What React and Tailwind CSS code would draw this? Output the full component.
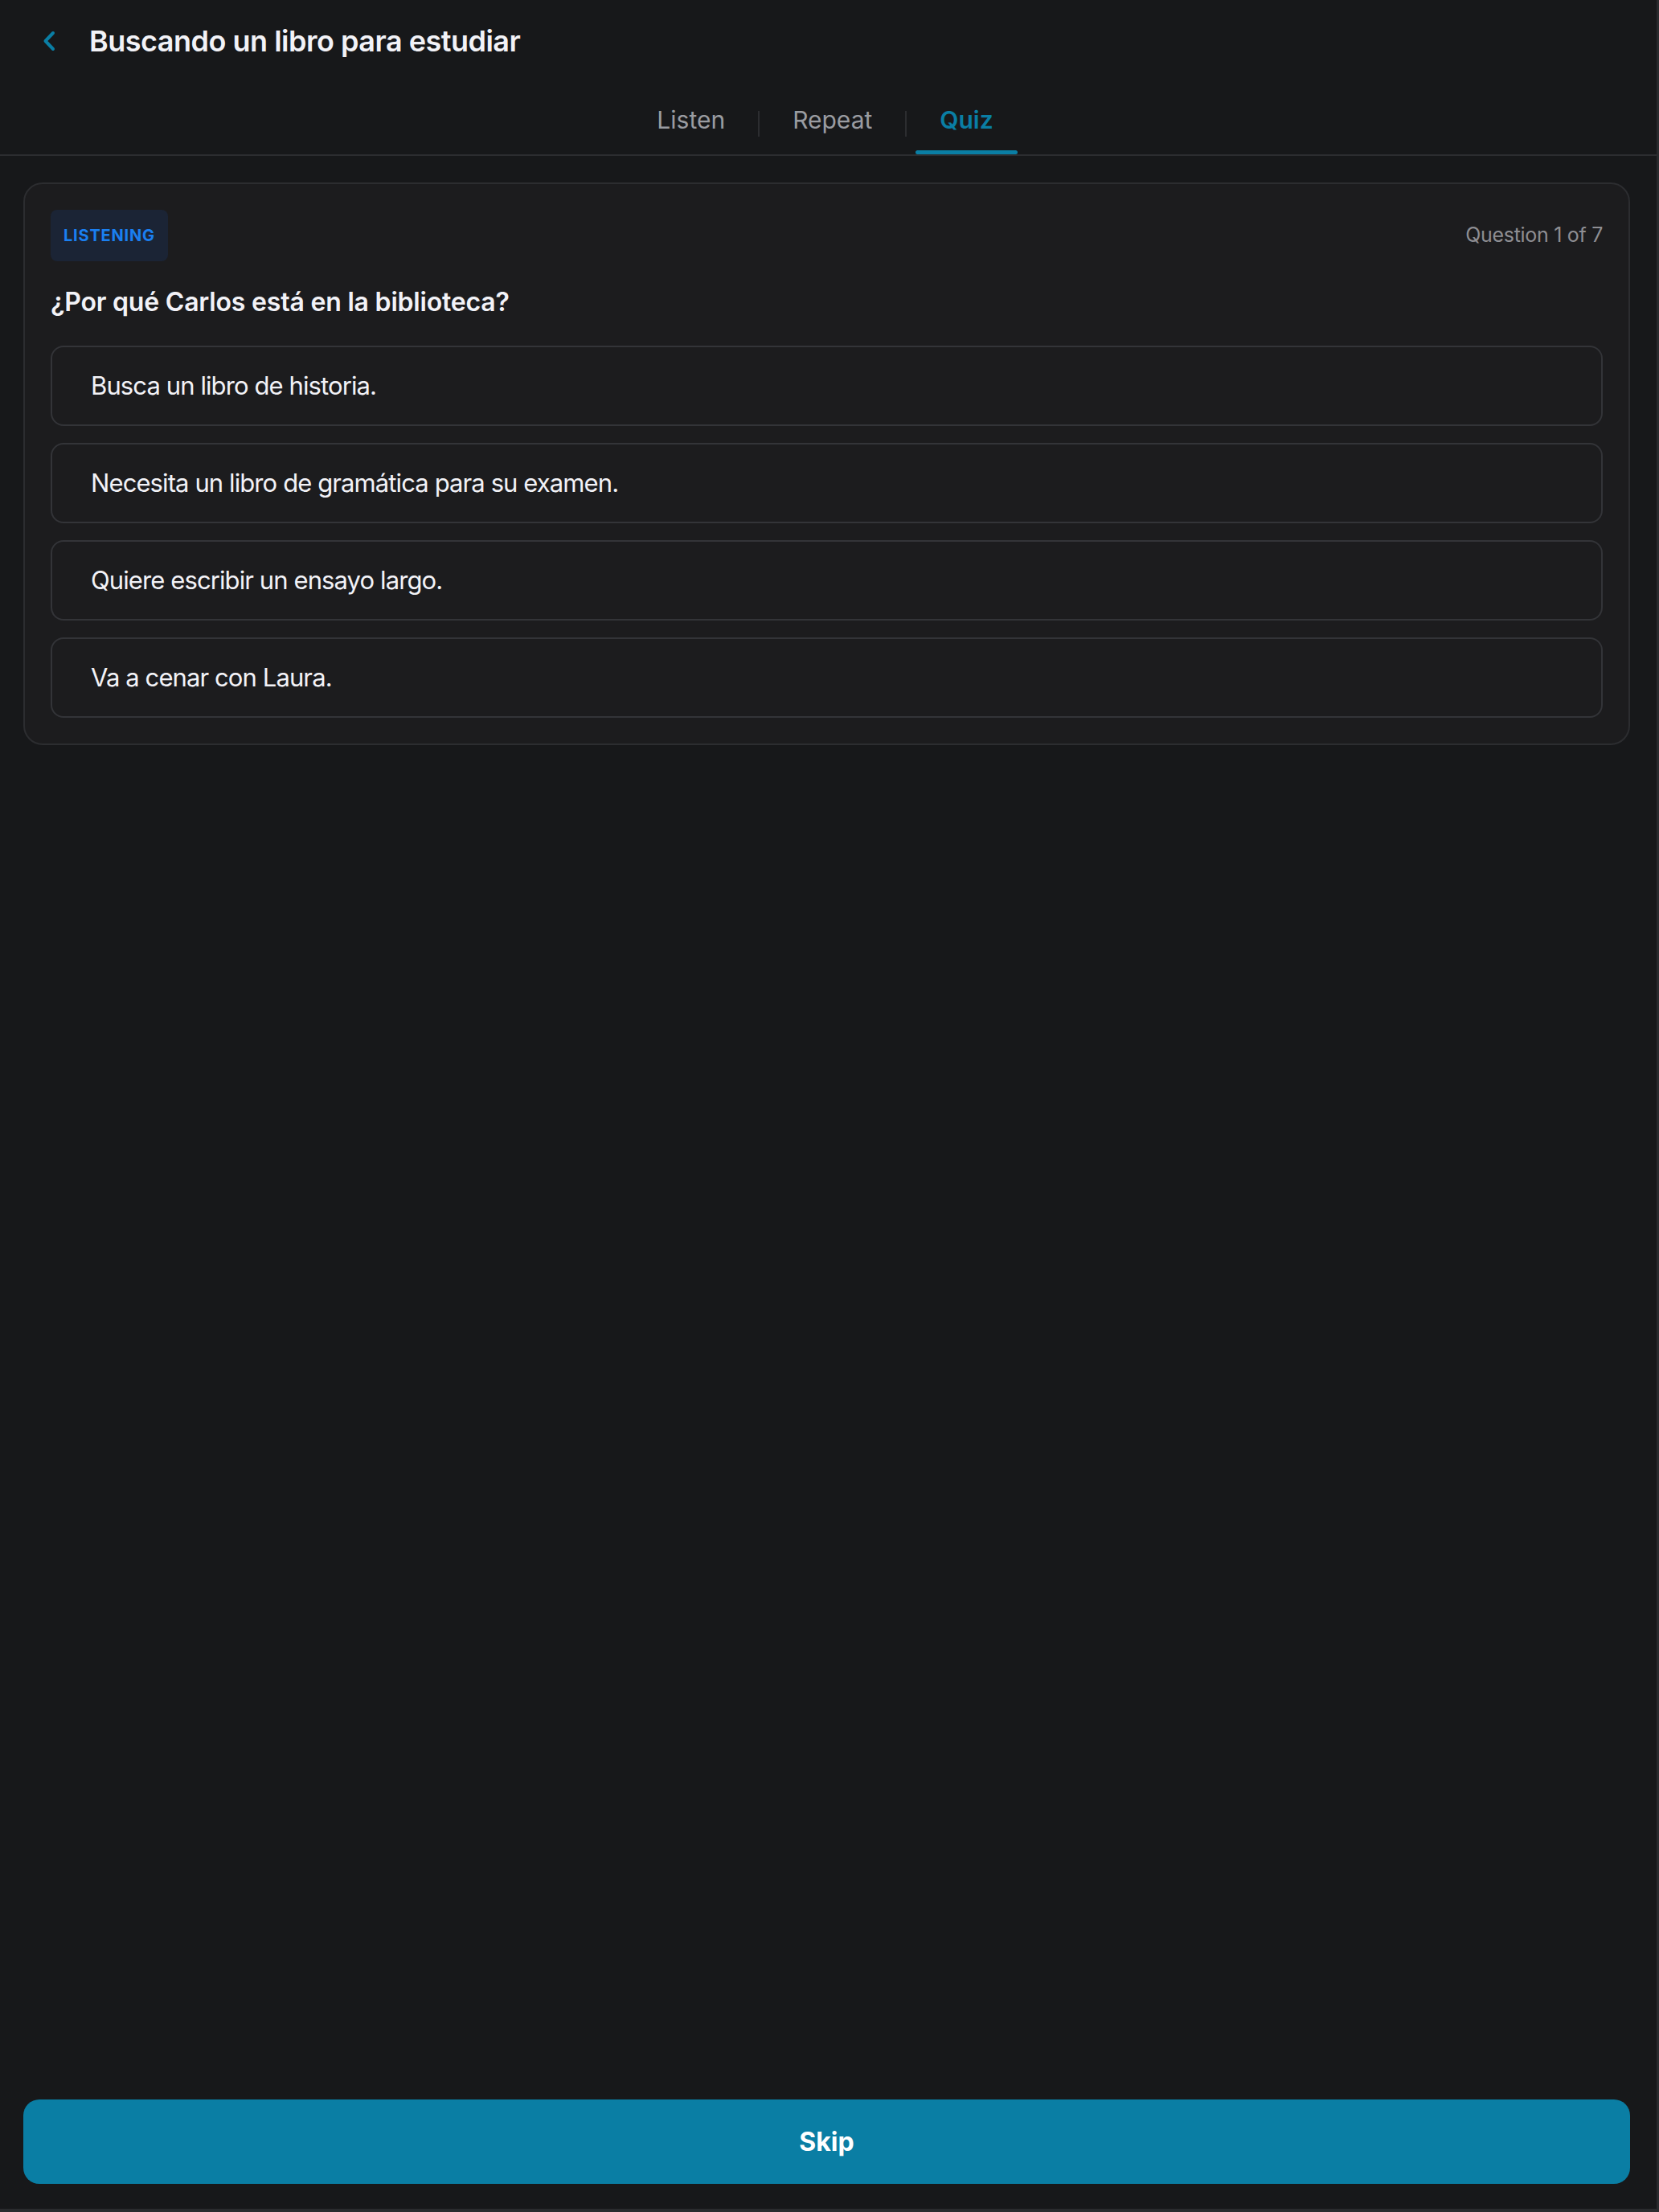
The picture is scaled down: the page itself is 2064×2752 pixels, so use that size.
const OPTIONS = [
  'Busca un libro de historia.',
  'Necesita un libro de gramática para su examen.',
  'Quiere escribir un ensayo largo.',
  'Va a cenar con Laura.',
]

const TABS = ['Listen', 'Repeat', 'Quiz']

export default function App() {
  return (
    <div
      className="w-full h-[2752px] bg-[#17181a] flex flex-col border-r-[3px] border-b-[4px] border-[#2a2b2e] text-[#f2f2f7]"
      style={{ fontFamily: 'Inter, "Noto Sans", sans-serif' }}
    >
      {/* Header */}
      <header className="h-[100px] flex items-center pl-[53px] pt-[2px]">
        <svg width="16" height="26" viewBox="0 0 16 26" fill="none" className="shrink-0">
          <path d="M13 3 L3.5 13 L13 23" stroke="#0a7ea4" strokeWidth="4" strokeLinecap="round" strokeLinejoin="round" />
        </svg>
        <h1 className="ml-[42px] text-[36px] font-semibold tracking-[-0.5px] leading-none">
          Buscando un libro para estudiar
        </h1>
      </header>

      {/* Tabs */}
      <nav className="h-[94px] flex justify-center items-stretch pr-[8px] border-b-2 border-[#2c2d30]">
        {TABS.map((t, i) => (
          <div key={t} className="flex items-stretch">
            {i > 0 && <span className="self-center mt-[16px] w-[2px] h-[32px] bg-[#2c2d30] mx-[11px]" />}
            <button
              className={
                t === 'Quiz'
                  ? 'relative px-[30px] pt-[6px] text-[30px] font-semibold text-[#0a7ea4] flex items-center'
                  : 'relative px-[30px] pt-[6px] text-[30px] text-[#9a9ca1] flex items-center'
              }
            >
              {t}
              {t === 'Quiz' && (
                <span className="absolute left-0 right-0 bottom-0 h-[5px] rounded-full bg-[#0a7ea4]" />
              )}
            </button>
          </div>
        ))}
      </nav>

      {/* Body */}
      <main className="flex-1 pl-[29px] pr-[33px] pt-[33px]">
        <div className="bg-[#1c1c1e] border-2 border-[#2c2d30] rounded-[24px] p-[32px]">
          <div className="flex items-center justify-between">
            <span className="h-[64px] px-[16px] flex items-center rounded-[8px] bg-[#1b2435] text-[#1a7ff0] text-[20px] font-bold tracking-[0.8px]">
              LISTENING
            </span>
            <span className="text-[25px] tracking-[-0.3px] text-[#8e8e93]">Question 1 of 7</span>
          </div>

          <h2 className="mt-[31px] mb-[34px] text-[32px] leading-[40px] font-semibold tracking-[-0.2px]">
            ¿Por qué Carlos está en la biblioteca?
          </h2>

          <div className="flex flex-col gap-[21px]">
            {OPTIONS.map((o) => (
              <button
                key={o}
                className="h-[100px] w-full text-left pl-[48px] border-2 border-[#333438] rounded-[16px] bg-[#1c1c1e] text-[31px] tracking-[-0.9px] text-[#f2f2f7]"
              >
                {o}
              </button>
            ))}
          </div>
        </div>
      </main>

      {/* Footer */}
      <footer className="pl-[29px] pr-[33px] pb-[31px]">
        <button className="w-full h-[105px] rounded-[20px] bg-[#0a7ea4] text-white text-[32px] font-bold">
          Skip
        </button>
      </footer>
    </div>
  )
}
